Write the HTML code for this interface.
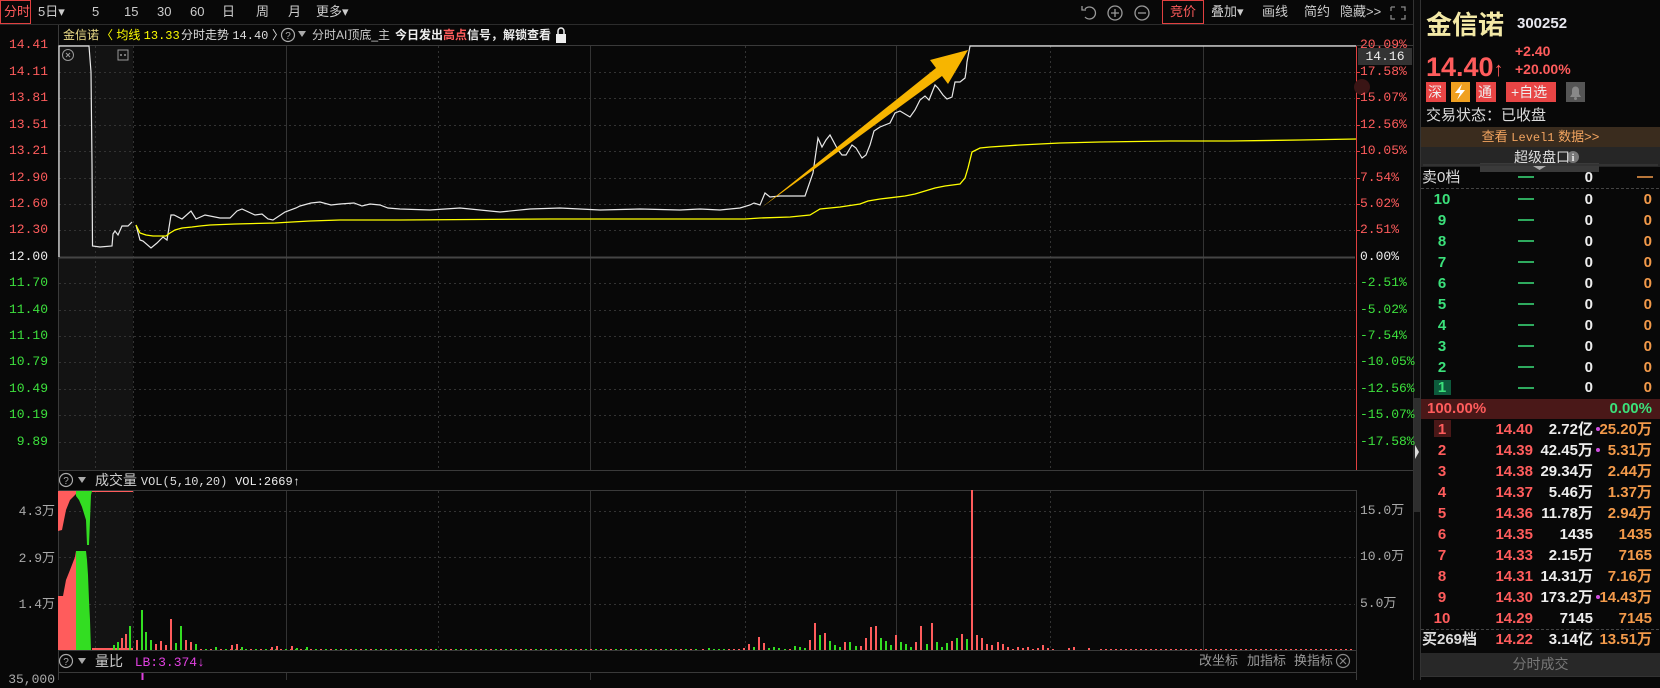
<!DOCTYPE html>
<html><head><meta charset="utf-8">
<style>
*{margin:0;padding:0;box-sizing:border-box}
body{width:1660px;height:680px;background:#080808;overflow:hidden;position:relative;font-family:"Liberation Sans","Noto Sans CJK SC",sans-serif;color:#ccc}
.t{position:absolute;white-space:nowrap;line-height:16px;font-size:13px}
.m{font-family:"Liberation Mono","Noto Sans CJK SC",monospace;font-size:12px}
.r{color:#ff5c5c}.g{color:#3de03d}.w{color:#eee}.y{color:#ffff00}.o{color:#f39a4a}.gr{color:#3be07a}
.lab{position:absolute;left:0;width:48px;text-align:right;line-height:16px;font-family:"Liberation Mono",monospace;font-size:13px}
.pct{position:absolute;left:1360px;line-height:16px;font-family:"Liberation Mono",monospace;font-size:13px}
.row{position:absolute;left:1421px;width:239px;height:21px;font-size:15px;font-weight:bold;line-height:21px}
.row span{position:absolute}
.idx{left:9px;width:24px;text-align:center}
.c2{right:127px}.c3{right:67px}.c4{right:8px}
</style></head><body>

<svg width="1660" height="680" style="position:absolute;left:0;top:0">
<line x1="0" y1="24.5" x2="1413" y2="24.5" stroke="#2c2c2c"/>
<rect x="59" y="46" width="74" height="424" fill="#131313"/>
<rect x="59" y="491" width="74" height="159" fill="#131313"/>
<g stroke="#333" stroke-dasharray="2 3">
<line x1="59" y1="72.5" x2="1355" y2="72.5"/><line x1="59" y1="98.5" x2="1355" y2="98.5"/>
<line x1="59" y1="125.5" x2="1355" y2="125.5"/><line x1="59" y1="151.5" x2="1355" y2="151.5"/>
<line x1="59" y1="178.5" x2="1355" y2="178.5"/><line x1="59" y1="204.5" x2="1355" y2="204.5"/>
<line x1="59" y1="230.5" x2="1355" y2="230.5"/><line x1="59" y1="283.5" x2="1355" y2="283.5"/>
<line x1="59" y1="310.5" x2="1355" y2="310.5"/><line x1="59" y1="336.5" x2="1355" y2="336.5"/>
<line x1="59" y1="362.5" x2="1355" y2="362.5"/><line x1="59" y1="389.5" x2="1355" y2="389.5"/>
<line x1="59" y1="415.5" x2="1355" y2="415.5"/><line x1="59" y1="442.5" x2="1355" y2="442.5"/>
<line x1="59" y1="511.5" x2="1355" y2="511.5"/><line x1="59" y1="557.5" x2="1355" y2="557.5"/>
<line x1="59" y1="604.5" x2="1355" y2="604.5"/>
<line x1="95.5" y1="46" x2="95.5" y2="470"/><line x1="133.5" y1="46" x2="133.5" y2="470"/>
<line x1="438.5" y1="46" x2="438.5" y2="470"/><line x1="745.5" y1="46" x2="745.5" y2="470"/>
<line x1="1050.5" y1="46" x2="1050.5" y2="470"/>
<line x1="95.5" y1="491" x2="95.5" y2="650"/><line x1="133.5" y1="491" x2="133.5" y2="650"/>
<line x1="438.5" y1="491" x2="438.5" y2="650"/><line x1="745.5" y1="491" x2="745.5" y2="650"/>
<line x1="1050.5" y1="491" x2="1050.5" y2="650"/>
</g>
<g stroke="#333">
<line x1="286.5" y1="46" x2="286.5" y2="470"/><line x1="590.5" y1="46" x2="590.5" y2="470"/>
<line x1="896.5" y1="46" x2="896.5" y2="470"/><line x1="1203.5" y1="46" x2="1203.5" y2="470"/>
<line x1="286.5" y1="491" x2="286.5" y2="650"/><line x1="590.5" y1="491" x2="590.5" y2="650"/>
<line x1="896.5" y1="491" x2="896.5" y2="650"/><line x1="1203.5" y1="491" x2="1203.5" y2="650"/>
<line x1="286.5" y1="672" x2="286.5" y2="680"/><line x1="590.5" y1="672" x2="590.5" y2="680"/>
</g>
<g stroke="#3a3a3a">
<line x1="58.5" y1="25" x2="58.5" y2="680"/>
<line x1="58" y1="45.5" x2="1413" y2="45.5"/>
<line x1="58" y1="470.5" x2="1413" y2="470.5"/>
<line x1="58" y1="490.5" x2="1356" y2="490.5"/>
<line x1="58" y1="650.5" x2="1356" y2="650.5"/>
<line x1="58" y1="672.5" x2="1356" y2="672.5"/>
<line x1="1356.5" y1="490" x2="1356.5" y2="680"/>
</g>
<line x1="59" y1="257.5" x2="1355" y2="257.5" stroke="#444" stroke-width="2"/>
<line x1="1356.5" y1="46" x2="1356.5" y2="470" stroke="#e04040"/>
<g stroke="#e04040"><line x1="1357" y1="72.5" x2="1360" y2="72.5"/><line x1="1357" y1="98.5" x2="1360" y2="98.5"/><line x1="1357" y1="125.5" x2="1360" y2="125.5"/><line x1="1357" y1="151.5" x2="1360" y2="151.5"/><line x1="1357" y1="178.5" x2="1360" y2="178.5"/><line x1="1357" y1="204.5" x2="1360" y2="204.5"/><line x1="1357" y1="230.5" x2="1360" y2="230.5"/></g>
<circle cx="1362" cy="87" r="8" fill="#3a1515"/>
<rect x="1413" y="0" width="8" height="680" fill="#0d0d0d"/>
<line x1="1413.5" y1="0" x2="1413.5" y2="680" stroke="#333"/>
<line x1="1420.5" y1="0" x2="1420.5" y2="680" stroke="#333"/>
<rect x="1414" y="398" width="6" height="114" fill="#2e2e2e"/>
<polygon points="1415,445 1419,452 1415,459" fill="#ddd"/>
<polyline fill="none" stroke="#e8e8e8" stroke-width="1.2" points="59,257 59,143 59,46 89,46 91,72 92,164 92.5,246 100,247 112,246 113,234 115,231 118,235 122,226 128,226 132,222"/>
<polyline fill="none" stroke="#e8e8e8" stroke-width="1.2" points="136,225 140,240 143,241 151,248 157,243 163,237 167,240 171,215 174,215 182,219 191,211 196,219 205,215 220,218 230,218 237,211 242,209 255,215 262,214 268,219 273,220 285,212 296,208 300,206 311,203 320,202 331,205 340,204 354,203 362,206 370,204 380,205 388,208 400,209 430,210 460,208 500,212 530,209 560,208 600,210 640,209 680,210 700,209 720,210 740,208 750,205 754,203 760,205 765,193 770,197 780,196 805,196 813,173 818,138 822,147 826,140 830,135 838,150 842,155 846,155 852,145 856,148 862,158 866,155 870,145 874,131 880,127 890,123 895,113 900,111 910,117 915,110 920,100 925,96 929,100 935,85 938,88 943,95 947,99 952,97 955,82 960,82 965,78 966,72 967,62 970,46 1356,46"/>
<polyline fill="none" stroke="#ffff00" stroke-width="1.3" points="136,225 140,233 146,235 153,236 166,236 170,233 175,230 182,228 192,227 200,226 210,225 235,224 275,223 292,222 310,221 340,220 400,220 550,219 700,219 745,219 760,218 790,217 810,215 815,212 820,209 840,207 860,204 868,201 880,199 905,196 915,194 925,191 935,188 945,186 960,184 965,178 968,168 972,152 980,148 990,147 1020,145 1060,143 1100,142 1170,141 1230,141 1300,140 1356,139"/>
<polygon points="761,208 936,68 930,60 968,50 948,84 942,76" fill="#f7b500"/>
<polygon points="58,491 76,491 76,494 70,500 66,510 62,530 58,531" fill="#ff5c5c"/>
<polygon points="76,491 92,491 91,495 89,545 87,545 86,520 82,507 79,500 76,496" fill="#33dd22"/>
<polygon points="58,650 58,596 63,596 66,580 70,570 75,557 76,551 76,650" fill="#ff5c5c"/>
<polygon points="76,551 86,551 87,560 88,575 89,600 90,620 91,650 76,650" fill="#33dd22"/>
<line x1="92" y1="649" x2="133" y2="649" stroke="#ff5c5c" stroke-width="2"/>
<line x1="92" y1="491.5" x2="133" y2="491.5" stroke="#ff5c5c" stroke-width="1"/>
<g stroke-width="2">
<line x1="114" y1="650" x2="114" y2="645" stroke="#33dd22"/><line x1="118" y1="650" x2="118" y2="642" stroke="#33dd22"/><line x1="122" y1="650" x2="122" y2="638" stroke="#ff5c5c"/><line x1="126" y1="650" x2="126" y2="634" stroke="#ff5c5c"/><line x1="130" y1="650" x2="130" y2="626" stroke="#33dd22"/>
</g>
<line x1="200" y1="649.5" x2="700" y2="649.5" stroke="#ff5c5c" stroke-width="1" stroke-dasharray="2 8"/>
<line x1="205" y1="649.5" x2="700" y2="649.5" stroke="#33dd22" stroke-width="1" stroke-dasharray="2 8"/>
<line x1="1100" y1="649.5" x2="1355" y2="649.5" stroke="#ff5c5c" stroke-width="1" stroke-dasharray="2 3"/>
<g stroke-width="2" stroke="#ff5c5c">
<line x1="137" y1="650" x2="137" y2="640"/><line x1="156" y1="650" x2="156" y2="644"/><line x1="161" y1="650" x2="161" y2="641"/><line x1="166" y1="650" x2="166" y2="645"/><line x1="171" y1="650" x2="171" y2="619"/><line x1="186" y1="650" x2="186" y2="640"/><line x1="191" y1="650" x2="191" y2="642"/><line x1="232" y1="650" x2="232" y2="645"/><line x1="237" y1="650" x2="237" y2="644"/><line x1="272" y1="650" x2="272" y2="647"/><line x1="277" y1="650" x2="277" y2="646"/><line x1="292" y1="650" x2="292" y2="646"/>
<line x1="703" y1="650" x2="703" y2="649"/><line x1="729" y1="650" x2="729" y2="649"/><line x1="734" y1="650" x2="734" y2="649"/><line x1="739" y1="650" x2="739" y2="649"/><line x1="744" y1="650" x2="744" y2="648"/><line x1="749" y1="650" x2="749" y2="644"/><line x1="759" y1="650" x2="759" y2="637"/><line x1="764" y1="650" x2="764" y2="643"/><line x1="790" y1="650" x2="790" y2="649"/><line x1="810" y1="650" x2="810" y2="640"/><line x1="815" y1="650" x2="815" y2="623"/><line x1="825" y1="650" x2="825" y2="633"/><line x1="845" y1="650" x2="845" y2="642"/><line x1="861" y1="650" x2="861" y2="646"/><line x1="866" y1="650" x2="866" y2="638"/><line x1="871" y1="650" x2="871" y2="627"/><line x1="876" y1="650" x2="876" y2="626"/><line x1="896" y1="650" x2="896" y2="635"/><line x1="916" y1="650" x2="916" y2="642"/><line x1="921" y1="650" x2="921" y2="626"/><line x1="932" y1="650" x2="932" y2="623"/><line x1="952" y1="650" x2="952" y2="641"/><line x1="962" y1="650" x2="962" y2="634"/><line x1="972" y1="650" x2="972" y2="490"/><line x1="977" y1="650" x2="977" y2="635"/><line x1="982" y1="650" x2="982" y2="638"/><line x1="987" y1="650" x2="987" y2="644"/><line x1="992" y1="650" x2="992" y2="645"/><line x1="998" y1="650" x2="998" y2="642"/><line x1="1003" y1="650" x2="1003" y2="644"/><line x1="1008" y1="650" x2="1008" y2="647"/><line x1="1013" y1="650" x2="1013" y2="649"/><line x1="1018" y1="650" x2="1018" y2="647"/><line x1="1023" y1="650" x2="1023" y2="648"/><line x1="1028" y1="650" x2="1028" y2="647"/><line x1="1033" y1="650" x2="1033" y2="649"/><line x1="1038" y1="650" x2="1038" y2="648"/><line x1="1043" y1="650" x2="1043" y2="645"/><line x1="1048" y1="650" x2="1048" y2="648"/><line x1="1053" y1="650" x2="1053" y2="649"/><line x1="1069" y1="650" x2="1069" y2="648"/><line x1="1074" y1="650" x2="1074" y2="647"/><line x1="1089" y1="650" x2="1089" y2="648"/>
</g>
<g stroke-width="2" stroke="#33dd22">
<line x1="142" y1="650" x2="142" y2="610"/><line x1="146" y1="650" x2="146" y2="632"/><line x1="151" y1="650" x2="151" y2="640"/><line x1="176" y1="650" x2="176" y2="643"/><line x1="181" y1="650" x2="181" y2="626"/><line x1="196" y1="650" x2="196" y2="644"/><line x1="216" y1="650" x2="216" y2="647"/><line x1="242" y1="650" x2="242" y2="647"/><line x1="297" y1="650" x2="297" y2="648"/><line x1="307" y1="650" x2="307" y2="647"/>
<line x1="709" y1="650" x2="709" y2="648"/><line x1="714" y1="650" x2="714" y2="649"/><line x1="719" y1="650" x2="719" y2="649"/><line x1="724" y1="650" x2="724" y2="649"/><line x1="754" y1="650" x2="754" y2="647"/><line x1="769" y1="650" x2="769" y2="648"/><line x1="774" y1="650" x2="774" y2="647"/><line x1="779" y1="650" x2="779" y2="648"/><line x1="785" y1="650" x2="785" y2="649"/><line x1="795" y1="650" x2="795" y2="646"/><line x1="800" y1="650" x2="800" y2="647"/><line x1="805" y1="650" x2="805" y2="648"/><line x1="820" y1="650" x2="820" y2="635"/><line x1="830" y1="650" x2="830" y2="641"/><line x1="835" y1="650" x2="835" y2="645"/><line x1="840" y1="650" x2="840" y2="647"/><line x1="850" y1="650" x2="850" y2="642"/><line x1="856" y1="650" x2="856" y2="646"/><line x1="881" y1="650" x2="881" y2="638"/><line x1="886" y1="650" x2="886" y2="641"/><line x1="891" y1="650" x2="891" y2="645"/><line x1="901" y1="650" x2="901" y2="642"/><line x1="906" y1="650" x2="906" y2="644"/><line x1="911" y1="650" x2="911" y2="647"/><line x1="927" y1="650" x2="927" y2="644"/><line x1="937" y1="650" x2="937" y2="642"/><line x1="942" y1="650" x2="942" y2="647"/><line x1="947" y1="650" x2="947" y2="643"/><line x1="957" y1="650" x2="957" y2="638"/><line x1="967" y1="650" x2="967" y2="639"/>
</g>
<line x1="142.5" y1="673" x2="142.5" y2="680" stroke="#e040e0" stroke-width="2"/>
<circle cx="288" cy="35" r="6.5" fill="none" stroke="#aaa" stroke-width="1.2"/>
<text x="288" y="39" font-size="10" fill="#aaa" text-anchor="middle" font-family="Liberation Sans">?</text>
<polygon points="298,31 306,31 302,37" fill="#aaa"/>
<circle cx="66" cy="480" r="6.5" fill="none" stroke="#aaa" stroke-width="1.2"/>
<text x="66" y="484" font-size="10" fill="#aaa" text-anchor="middle" font-family="Liberation Sans">?</text>
<polygon points="78,477 86,477 82,483" fill="#aaa"/>
<circle cx="66" cy="661" r="6.5" fill="none" stroke="#aaa" stroke-width="1.2"/>
<text x="66" y="665" font-size="10" fill="#aaa" text-anchor="middle" font-family="Liberation Sans">?</text>
<polygon points="78,658 86,658 82,664" fill="#aaa"/>
<circle cx="1343" cy="661" r="6.5" fill="none" stroke="#888" stroke-width="1.2"/>
<path d="M1340,658 L1346,664 M1346,658 L1340,664" stroke="#888" stroke-width="1.2"/>
<circle cx="68" cy="55" r="5.5" fill="none" stroke="#999"/>
<path d="M66,53 L70,57 M70,53 L66,57" stroke="#999"/>
<rect x="118" y="50" width="10" height="10" fill="none" stroke="#999"/>
<circle cx="121" cy="55" r="1" fill="#999"/><circle cx="125" cy="55" r="1" fill="#999"/>
<rect x="556" y="34" width="10" height="9" fill="#eee"/>
<path d="M558,34 V31 a3,3 0 0 1 6,0 V34" fill="none" stroke="#eee" stroke-width="1.5"/>
<path d="M1083,9 a6,6 0 1 1 0,8" fill="none" stroke="#999" stroke-width="1.3" transform="translate(2,0)"/>
<path d="M1082,6 L1082,10 L1086,10" fill="none" stroke="#999" stroke-width="1.3"/>
<circle cx="1115" cy="13" r="7" fill="none" stroke="#999" stroke-width="1.3"/>
<path d="M1111,13 H1119 M1115,9 V17" stroke="#999" stroke-width="1.3"/>
<circle cx="1142" cy="13" r="7" fill="none" stroke="#999" stroke-width="1.3"/>
<path d="M1138,13 H1146" stroke="#999" stroke-width="1.3"/>
<rect x="1162.5" y="0.5" width="41" height="23" fill="none" stroke="#e04040"/>
<rect x="0.5" y="0.5" width="30" height="23" fill="none" stroke="#e04040"/>
<path d="M1391,7 V11 M1391,7 H1395 M1401,7 H1405 V11 M1391,15 V19 H1395 M1405,15 V19 H1401" fill="none" stroke="#888" stroke-width="1.3"/>
<rect x="1421" y="127" width="239" height="20" fill="#3a2c1e"/>
<rect x="1421" y="147" width="239" height="20" fill="#262626"/>
<rect x="1480" y="163" width="119" height="9" fill="#3a3a3a"/>
<polygon points="1533,166 1546,166 1539.5,170" fill="#aaa"/>
<rect x="1423" y="164" width="235" height="2" fill="#333"/>
<line x1="1421" y1="188.5" x2="1660" y2="188.5" stroke="#444" stroke-dasharray="3 2"/>
<rect x="1434" y="380" width="17" height="15" fill="#0d5a3c"/>
<rect x="1421" y="399" width="239" height="20" fill="#4a1818"/>
<rect x="1434" y="420" width="17" height="17" fill="#4a1818"/>
<line x1="1421" y1="629.5" x2="1660" y2="629.5" stroke="#444" stroke-dasharray="3 2"/>
<rect x="1421" y="653" width="239" height="23" fill="#282828"/>
<line x1="1421" y1="676.5" x2="1660" y2="676.5" stroke="#333"/>
<line x1="1518" y1="177" x2="1534" y2="177" stroke="#3be07a" stroke-width="1.5"/>
<line x1="1637" y1="177" x2="1653" y2="177" stroke="#f39a4a" stroke-width="1.5"/>
<g stroke="#3be07a" stroke-width="1.5">
<line x1="1518" y1="199" x2="1534" y2="199"/><line x1="1518" y1="220" x2="1534" y2="220"/><line x1="1518" y1="241" x2="1534" y2="241"/><line x1="1518" y1="262" x2="1534" y2="262"/><line x1="1518" y1="283" x2="1534" y2="283"/><line x1="1518" y1="304" x2="1534" y2="304"/><line x1="1518" y1="325" x2="1534" y2="325"/><line x1="1518" y1="346" x2="1534" y2="346"/><line x1="1518" y1="367" x2="1534" y2="367"/><line x1="1518" y1="388" x2="1534" y2="388"/>
</g>
<g fill="#d050e0"><circle cx="1598" cy="429" r="2"/><circle cx="1598" cy="450" r="2"/><circle cx="1598" cy="597" r="2"/></g>
<rect x="1426" y="82" width="20" height="20" fill="#e84545"/>
<rect x="1451" y="82" width="19" height="20" fill="#f0a020"/>
<path d="M1462,84 L1455,93 L1460,93 L1457,100 L1465,90 L1460,90 Z" fill="#fff"/>
<rect x="1476" y="82" width="20" height="20" fill="#e84545"/>
<rect x="1506" y="82" width="50" height="20" fill="#e84545"/>
<rect x="1566" y="82" width="19" height="20" fill="#555"/>
<path d="M1570,97 H1581 L1579,94 V90 a3.5,3.5 0 0 0 -7,0 V94 Z" fill="#888"/>
<circle cx="1575.5" cy="98.5" r="1.5" fill="#888"/>
<circle cx="1573" cy="157" r="6" fill="#777"/>
<text x="1573" y="161" font-size="10" font-weight="bold" fill="#eee" text-anchor="middle" font-family="Liberation Serif">i</text>
</svg>

<div class="t r" style="left:4px;top:4px;font-size:13px">分时</div>
<div class="t" style="left:38px;top:4px">5日▾</div>
<div class="t" style="left:92px;top:4px">5</div>
<div class="t" style="left:124px;top:4px">15</div>
<div class="t" style="left:157px;top:4px">30</div>
<div class="t" style="left:190px;top:4px">60</div>
<div class="t" style="left:222px;top:4px">日</div>
<div class="t" style="left:256px;top:4px">周</div>
<div class="t" style="left:288px;top:4px">月</div>
<div class="t" style="left:316px;top:4px">更多▾</div>
<div class="t r" style="left:1170px;top:4px">竞价</div>
<div class="t" style="left:1211px;top:4px">叠加▾</div>
<div class="t" style="left:1262px;top:4px">画线</div>
<div class="t" style="left:1304px;top:4px">简约</div>
<div class="t" style="left:1340px;top:4px">隐藏&gt;&gt;</div>

<div class="t" style="left:63px;top:27px;color:#f0e08a;font-size:12px">金信诺</div>
<div class="t y" style="left:101px;top:27px;font-size:12px">〈 均线 <span class="m">13.33</span></div>
<div class="t" style="left:181px;top:27px;color:#ddd;font-size:12px">分时走势 <span class="m">14.40</span></div>
<div class="t" style="left:272px;top:27px;color:#ddd;font-size:12px">〉</div>
<div class="t" style="left:312px;top:27px;color:#ccc;font-size:12px">分时AI顶底_主</div>
<div class="t w" style="left:395px;top:27px;font-weight:bold;font-size:12px">今日发出<span class="r">高点</span>信号，解锁查看</div>

<div class="lab r" style="top:37px">14.41</div>
<div class="lab r" style="top:64px">14.11</div>
<div class="lab r" style="top:90px">13.81</div>
<div class="lab r" style="top:117px">13.51</div>
<div class="lab r" style="top:143px">13.21</div>
<div class="lab r" style="top:170px">12.90</div>
<div class="lab r" style="top:196px">12.60</div>
<div class="lab r" style="top:222px">12.30</div>
<div class="lab w" style="top:249px">12.00</div>
<div class="lab g" style="top:275px">11.70</div>
<div class="lab g" style="top:302px">11.40</div>
<div class="lab g" style="top:328px">11.10</div>
<div class="lab g" style="top:354px">10.79</div>
<div class="lab g" style="top:381px">10.49</div>
<div class="lab g" style="top:407px">10.19</div>
<div class="lab g" style="top:434px">9.89</div>

<div class="pct r" style="top:37px">20.09%</div>
<div class="pct r" style="top:64px">17.58%</div>
<div class="pct r" style="top:90px">15.07%</div>
<div class="pct r" style="top:117px">12.56%</div>
<div class="pct r" style="top:143px">10.05%</div>
<div class="pct r" style="top:170px">7.54%</div>
<div class="pct r" style="top:196px">5.02%</div>
<div class="pct r" style="top:222px">2.51%</div>
<div class="pct w" style="top:249px">0.00%</div>
<div class="pct g" style="top:275px">-2.51%</div>
<div class="pct g" style="top:302px">-5.02%</div>
<div class="pct g" style="top:328px">-7.54%</div>
<div class="pct g" style="top:354px">-10.05%</div>
<div class="pct g" style="top:381px">-12.56%</div>
<div class="pct g" style="top:407px">-15.07%</div>
<div class="pct g" style="top:434px">-17.58%</div>
<div class="t m w" style="left:1358px;top:48px;width:54px;height:17px;background:#333;text-align:center;line-height:17px;font-size:13px">14.16</div>

<div class="t" style="left:95px;top:472px;font-size:14px">成交量 <span class="m" style="color:#ddd">VOL(5,10,20)</span> &nbsp;<span class="m w">VOL:2669↑</span></div>
<div class="lab" style="top:504px;color:#aaa;width:55px">4.3万</div>
<div class="lab" style="top:551px;color:#aaa;width:55px">2.9万</div>
<div class="lab" style="top:597px;color:#aaa;width:55px">1.4万</div>
<div class="pct" style="top:503px;color:#aaa">15.0万</div>
<div class="pct" style="top:549px;color:#aaa">10.0万</div>
<div class="pct" style="top:596px;color:#aaa">5.0万</div>
<div class="t" style="left:1199px;top:653px;color:#999">改坐标</div>
<div class="t" style="left:1247px;top:653px;color:#999">加指标</div>
<div class="t" style="left:1294px;top:653px;color:#999">换指标</div>
<div class="t" style="left:95px;top:653px;font-size:14px">量比 <span class="m" style="color:#e040e0;font-size:13px">&nbsp;LB:3.374↓</span></div>
<div class="lab" style="top:672px;color:#aaa;width:55px">35,000</div>

<div class="t" style="left:1426px;top:10px;font-size:26px;line-height:30px;font-weight:bold;color:#f3e9a6">金信诺</div>
<div class="t" style="left:1517px;top:16px;font-size:15px;font-weight:bold;color:#e8e8f0">300252</div>
<div class="t r" style="left:1426px;top:52px;font-size:27px;line-height:30px;font-weight:bold">14.40<span style="font-size:20px">↑</span></div>
<div class="t r" style="left:1515px;top:43px;font-size:14px;font-weight:bold">+2.40</div>
<div class="t r" style="left:1515px;top:61px;font-size:14px;font-weight:bold">+20.00%</div>
<div class="t w" style="left:1428px;top:84px;font-size:14px">深</div>
<div class="t w" style="left:1478px;top:84px;font-size:14px">通</div>
<div class="t w" style="left:1511px;top:84px;font-size:14px">+自选</div>
<div class="t" style="left:1426px;top:108px;font-size:15px;color:#ddd">交易状态：已收盘</div>
<div class="t" style="left:1421px;top:129px;width:239px;text-align:center;color:#f3a560;font-size:13px">查看 <span class="m">Level1</span> 数据&gt;&gt;</div>
<div class="t" style="left:1514px;top:149px;color:#ddd;font-size:14px">超级盘口</div>

<div class="row" style="top:167px"><span style="left:1px;color:#ddd;font-weight:normal">卖0档</span><span class="c3 w">0</span></div>
<div class="row gr" style="top:189px"><span class="idx">10</span><span class="c3 w">0</span><span class="c4 o">0</span></div>
<div class="row gr" style="top:210px"><span class="idx">9</span><span class="c3 w">0</span><span class="c4 o">0</span></div>
<div class="row gr" style="top:231px"><span class="idx">8</span><span class="c3 w">0</span><span class="c4 o">0</span></div>
<div class="row gr" style="top:252px"><span class="idx">7</span><span class="c3 w">0</span><span class="c4 o">0</span></div>
<div class="row gr" style="top:273px"><span class="idx">6</span><span class="c3 w">0</span><span class="c4 o">0</span></div>
<div class="row gr" style="top:294px"><span class="idx">5</span><span class="c3 w">0</span><span class="c4 o">0</span></div>
<div class="row gr" style="top:315px"><span class="idx">4</span><span class="c3 w">0</span><span class="c4 o">0</span></div>
<div class="row gr" style="top:336px"><span class="idx">3</span><span class="c3 w">0</span><span class="c4 o">0</span></div>
<div class="row gr" style="top:357px"><span class="idx">2</span><span class="c3 w">0</span><span class="c4 o">0</span></div>
<div class="row gr" style="top:377px"><span class="idx">1</span><span class="c3 w">0</span><span class="c4 o">0</span></div>
<div class="row" style="top:398px"><span class="r" style="left:6px">100.00%</span><span class="gr c4">0.00%</span></div>

<div class="row r" style="top:419px"><span class="idx">1</span><span class="c2">14.40</span><span class="c3 w">2.72亿</span><span class="c4 o">25.20万</span></div>
<div class="row r" style="top:440px"><span class="idx">2</span><span class="c2">14.39</span><span class="c3 w">42.45万</span><span class="c4 o">5.31万</span></div>
<div class="row r" style="top:461px"><span class="idx">3</span><span class="c2">14.38</span><span class="c3 w">29.34万</span><span class="c4 o">2.44万</span></div>
<div class="row r" style="top:482px"><span class="idx">4</span><span class="c2">14.37</span><span class="c3 w">5.46万</span><span class="c4 o">1.37万</span></div>
<div class="row r" style="top:503px"><span class="idx">5</span><span class="c2">14.36</span><span class="c3 w">11.78万</span><span class="c4 o">2.94万</span></div>
<div class="row r" style="top:524px"><span class="idx">6</span><span class="c2">14.35</span><span class="c3 w">1435</span><span class="c4 o">1435</span></div>
<div class="row r" style="top:545px"><span class="idx">7</span><span class="c2">14.33</span><span class="c3 w">2.15万</span><span class="c4 o">7165</span></div>
<div class="row r" style="top:566px"><span class="idx">8</span><span class="c2">14.31</span><span class="c3 w">14.31万</span><span class="c4 o">7.16万</span></div>
<div class="row r" style="top:587px"><span class="idx">9</span><span class="c2">14.30</span><span class="c3 w">173.2万</span><span class="c4 o">14.43万</span></div>
<div class="row r" style="top:608px"><span class="idx">10</span><span class="c2">14.29</span><span class="c3 w">7145</span><span class="c4 o">7145</span></div>
<div class="row r" style="top:629px"><span style="left:1px;color:#ddd">买269档</span><span class="c2">14.22</span><span class="c3 w">3.14亿</span><span class="c4 o">13.51万</span></div>
<div class="t" style="left:1421px;top:656px;width:239px;text-align:center;color:#777;font-size:14px">分时成交</div>
</body></html>
